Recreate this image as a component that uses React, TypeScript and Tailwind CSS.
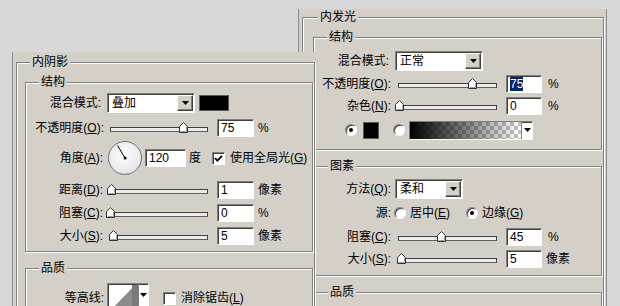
import React from 'react';

type Kids = { children?: React.ReactNode; className?: string };

const SUNKEN =
  'border border-t-[#808080] border-l-[#808080] border-b-white border-r-white shadow-[inset_1px_1px_0_#404040]';
const RAISED =
  'border border-t-white border-l-white border-b-[#404040] border-r-[#404040] shadow-[inset_-1px_-1px_0_#808080]';

function Group({
  title,
  className = '',
  legendClass = 'ml-[13px]',
  children,
}: Kids & { title: string; legendClass?: string }) {
  return (
    <fieldset className={`border border-[#808080] shadow-[inset_1px_1px_0_#fff,1px_1px_0_#fff] ${className}`}>
      <legend className={`${legendClass} px-[2px] bg-[#d4d0c8] leading-[14px]`}>{title}</legend>
      {children}
    </fieldset>
  );
}

function Row({ className = '', children }: Kids) {
  return <div className={`flex items-center h-[22px] whitespace-nowrap ${className}`}>{children}</div>;
}

function Label({ className = '', children }: Kids) {
  return <span className={`shrink-0 text-right leading-[14px] ${className}`}>{children}</span>;
}

function Arrow() {
  return (
    <svg width="7" height="4" viewBox="0 0 7 4">
      <path d="M0 0h7L3.5 4z" fill="#000" />
    </svg>
  );
}

function Select({ value, className = '' }: { value: string; className?: string }) {
  return (
    <div className={`flex items-center h-[20px] bg-white ${SUNKEN} ${className}`}>
      <span className="flex-1 pl-[4px] leading-[14px]">{value}</span>
      <div className={`w-[16px] h-[16px] mr-[1px] flex items-center justify-center bg-[#d4d0c8] ${RAISED}`}>
        <Arrow />
      </div>
    </div>
  );
}

function Field({ className = '', children }: Kids) {
  return (
    <div className={`h-[18px] bg-white pl-[3px] pt-[1px] leading-[14px] shrink-0 ${SUNKEN} ${className}`}>
      {children}
    </div>
  );
}

function Slider({ value, className = '' }: { value: number; className?: string }) {
  return (
    <div className={`relative h-[14px] shrink-0 ${className}`}>
      <div className="absolute left-[2px] right-[2px] top-[6px] h-[5px] border border-[#404040] border-b-[#606060] bg-[#ececec]" />
      <svg
        className="absolute top-[1px]"
        width="9"
        height="11"
        viewBox="0 0 9 11"
        style={{ left: `calc(2px + ${value} * (100% - 4px) - 4.5px)` }}
      >
        <path d="M4.5 0.5L8.5 4.5V10.5H0.5V4.5Z" fill="#fff" stroke="#303030" />
        <path d="M7.5 5V9.5H1.5" fill="none" stroke="#a0a0a0" />
      </svg>
    </div>
  );
}

function Radio({ on = false, className = '' }: { on?: boolean; className?: string }) {
  return (
    <span
      className={`relative shrink-0 inline-block w-[12px] h-[12px] rounded-full bg-white border border-t-[#808080] border-l-[#808080] border-b-white border-r-white shadow-[inset_1px_1px_0_#404040] ${className}`}
    >
      {on && <span className="absolute left-[3px] top-[3px] w-[4px] h-[4px] rounded-full bg-black" />}
    </span>
  );
}

function Check({ on = false, className = '' }: { on?: boolean; className?: string }) {
  return (
    <span className={`relative shrink-0 inline-block w-[13px] h-[13px] bg-white ${SUNKEN} ${className}`}>
      {on && (
        <svg className="absolute left-[1px] top-[1px]" width="9" height="9" viewBox="0 0 9 9">
          <path d="M1 4.2L3.4 6.6L8 1.8" fill="none" stroke="#000" strokeWidth="1.8" />
        </svg>
      )}
    </span>
  );
}

function Dial() {
  return (
    <svg width="36" height="36" viewBox="0 0 36 36" className="shrink-0">
      <defs>
        <radialGradient id="dialFill" cx="45%" cy="40%" r="60%">
          <stop offset="0%" stopColor="#ffffff" />
          <stop offset="100%" stopColor="#e4e4ea" />
        </radialGradient>
      </defs>
      <circle cx="18" cy="18" r="16.5" fill="url(#dialFill)" stroke="#707070" />
      <path d="M4 26A16 16 0 0 0 32 26" fill="none" stroke="#9a9a9a" />
      <line x1="18" y1="18" x2="10.5" y2="5.5" stroke="#000" strokeWidth="1" />
      <rect x="16.8" y="16.8" width="2.6" height="2.6" fill="#000" />
    </svg>
  );
}

function LeftPanel() {
  return (
    <div className="absolute left-[12px] top-[52px] z-10 w-[304px] h-[270px] overflow-hidden bg-[#d4d0c8] border-l border-l-[#8c8c8c] pl-[3px] pt-[3px]">
      <Group title="内阴影" className="w-[299px] h-[320px]">
        <Group title="结构" className="ml-[8px] mt-[6px] w-[288px] pb-[4px]">
          <Row className="mt-[3px]">
            <Label className="w-[75px]">混合模式:</Label>
            <Select value="叠加" className="ml-[6px] w-[88px]" />
            <div className="ml-[4px] w-[30px] h-[16px] bg-black border border-[#5a5a5a]" />
          </Row>
          <Row className="mt-[3px]">
            <Label className="w-[78px]">
              不透明度(<u>O</u>):
            </Label>
            <Slider value={0.75} className="ml-[4px] w-[102px]" />
            <Field className="ml-[7px] w-[37px]">75</Field>
            <span className="ml-[4px]">%</span>
          </Row>
          <Row className="mt-[1px] h-[36px]">
            <Label className="w-[77px]">
              角度(<u>A</u>):
            </Label>
            <div className="ml-[4px]">
              <Dial />
            </div>
            <Field className="ml-[2px] w-[41px]">120</Field>
            <span className="ml-[3px]">度</span>
            <Check on className="ml-[11px]" />
            <span className="ml-[5px]">
              使用全局光(<u>G</u>)
            </span>
          </Row>
          <Row className="mt-[3px]">
            <Label className="w-[77px]">
              距离(<u>D</u>):
            </Label>
            <Slider value={0.02} className="ml-[5px] w-[102px]" />
            <Field className="ml-[7px] w-[37px]">1</Field>
            <span className="ml-[4px]">像素</span>
          </Row>
          <Row className="mt-[1px]">
            <Label className="w-[77px]">
              阻塞(<u>C</u>):
            </Label>
            <Slider value={0} className="ml-[5px] w-[102px]" />
            <Field className="ml-[7px] w-[37px]">0</Field>
            <span className="ml-[4px]">%</span>
          </Row>
          <Row className="mt-[1px]">
            <Label className="w-[77px]">
              大小(<u>S</u>):
            </Label>
            <Slider value={0.04} className="ml-[5px] w-[102px]" />
            <Field className="ml-[7px] w-[37px]">5</Field>
            <span className="ml-[4px]">像素</span>
          </Row>
        </Group>
        <Group title="品质" className="ml-[8px] mt-[9px] w-[288px] h-[80px]">
          <Row className="mt-[8px] h-[30px]">
            <Label className="w-[78px]">等高线:</Label>
            <div className={`ml-[3px] flex h-[30px] bg-white ${SUNKEN}`}>
              <svg width="30" height="28" viewBox="0 0 30 28">
                <polygon points="0,29 27,1 30,1 30,28" fill="#8c8c8c" />
                <rect x="24" y="1" width="6" height="27" fill="#7a7a7a" />
              </svg>
              <div className="w-[10px] flex items-start justify-center pt-[9px] border-l border-[#808080]">
                <Arrow />
              </div>
            </div>
            <Check className="ml-[14px]" />
            <span className="ml-[5px]">
              消除锯齿(<u>L</u>)
            </span>
          </Row>
        </Group>
      </Group>
    </div>
  );
}

function RightPanel() {
  return (
    <div className="absolute left-[298px] top-[9px] w-[309px] h-[310px] overflow-hidden bg-[#d4d0c8] border-l border-r border-l-[#8c8c8c] border-r-[#8c8c8c] pl-[3px] pt-[1px]">
      <Group title="内发光" legendClass="ml-[15px]" className="w-[302px] h-[320px]">
        <Group title="结构" className="ml-[10px] mt-[6px] w-[289px] pb-[8px]">
          <Row className="mt-[6px]">
            <Label className="w-[75px]">混合模式:</Label>
            <Select value="正常" className="ml-[6px] w-[88px]" />
          </Row>
          <Row className="mt-[1px]">
            <Label className="w-[77px]">
              不透明度(<u>O</u>):
            </Label>
            <Slider value={0.75} className="ml-[5px] w-[103px]" />
            <Field className="ml-[7px] w-[36px]">
              <span className="bg-[#0a246a] text-white">75</span>
            </Field>
            <span className="ml-[6px]">%</span>
          </Row>
          <Row>
            <Label className="w-[77px]">
              杂色(<u>N</u>):
            </Label>
            <Slider value={0.01} className="ml-[5px] w-[103px]" />
            <Field className="ml-[7px] w-[36px]">0</Field>
            <span className="ml-[6px]">%</span>
          </Row>
          <Row className="mt-[2px]">
            <Radio on className="ml-[31px]" />
            <div className="ml-[6px] w-[16px] h-[17px] bg-black border border-[#5a5a5a]" />
            <Radio className="ml-[14px]" />
            <div className={`ml-[4px] flex h-[19px] w-[124px] bg-white ${SUNKEN}`}>
              <div className="flex-1 [background:linear-gradient(to_right,#000,transparent),repeating-conic-gradient(#c4c4c4_0_25%,#fff_0_50%)_0_0/8px_8px]" />
              <div className="w-[11px] flex items-center justify-center border-l border-[#808080]">
                <Arrow />
              </div>
            </div>
          </Row>
        </Group>
        <Group title="图素" legendClass="ml-[14px]" className="ml-[10px] mt-[9px] w-[289px] pb-[5px]">
          <Row className="mt-[5px]">
            <Label className="w-[77px]">
              方法(<u>Q</u>):
            </Label>
            <Select value="柔和" className="ml-[4px] w-[68px]" />
          </Row>
          <Row className="mt-[2px]">
            <Label className="w-[77px]">源:</Label>
            <Radio className="ml-[3px]" />
            <span className="ml-[4px]">
              居中(<u>E</u>)
            </span>
            <Radio on className="ml-[16px]" />
            <span className="ml-[4px]">
              边缘(<u>G</u>)
            </span>
          </Row>
          <Row className="mt-[2px]">
            <Label className="w-[77px]">
              阻塞(<u>C</u>):
            </Label>
            <Slider value={0.44} className="ml-[5px] w-[103px]" />
            <Field className="ml-[7px] w-[36px]">45</Field>
            <span className="ml-[6px]">%</span>
          </Row>
          <Row>
            <Label className="w-[77px]">
              大小(<u>S</u>):
            </Label>
            <Slider value={0.04} className="ml-[5px] w-[103px]" />
            <Field className="ml-[7px] w-[36px]">5</Field>
            <span className="ml-[4px]">像素</span>
          </Row>
        </Group>
        <Group title="品质" legendClass="ml-[14px]" className="ml-[10px] mt-[9px] w-[289px] h-[60px]">
          <div />
        </Group>
      </Group>
    </div>
  );
}

export default function App() {
  return (
    <div className="relative w-[620px] h-[306px] overflow-hidden bg-[#d8d8d8] font-['Liberation_Sans','Noto_Sans_CJK_SC',sans-serif] text-[12px] leading-[14px] text-black">
      <RightPanel />
      <LeftPanel />
    </div>
  );
}
